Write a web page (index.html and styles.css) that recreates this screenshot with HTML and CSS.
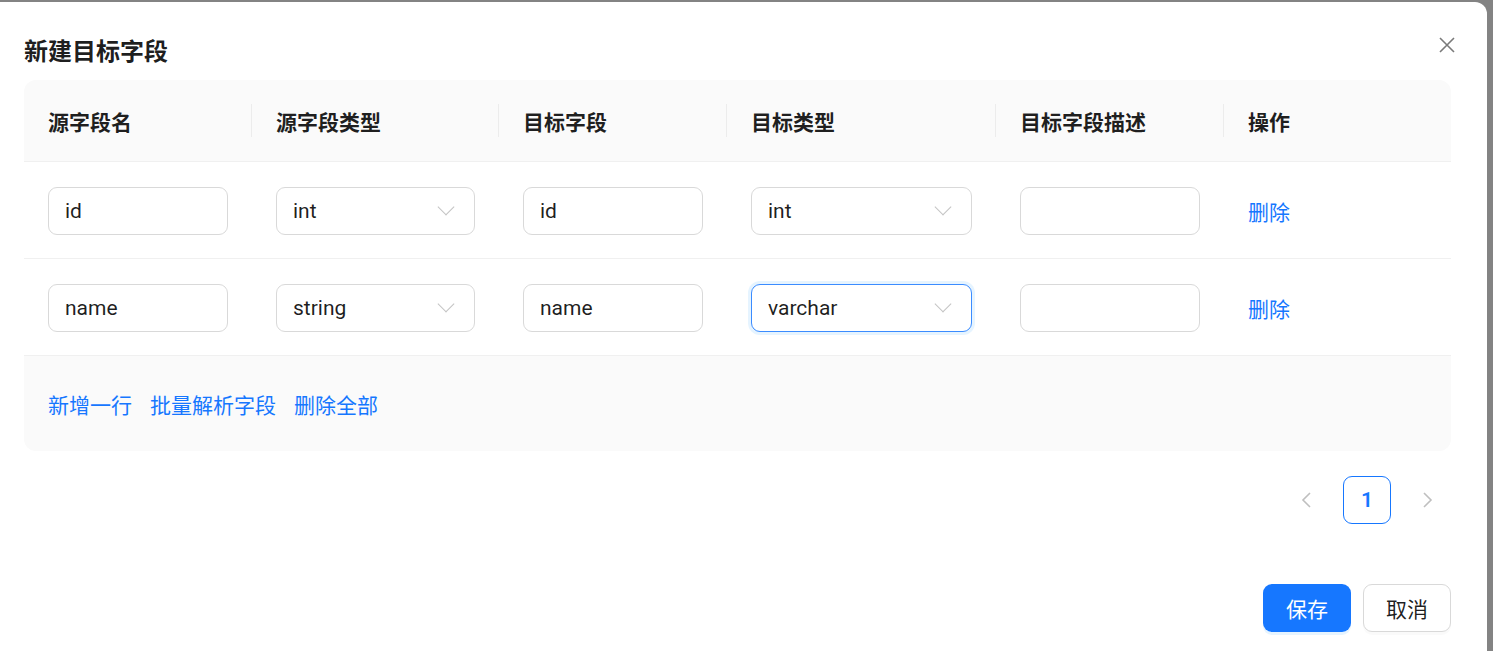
FILE: index.html
```html
<!DOCTYPE html>
<html lang="zh-CN">
<head>
    <meta charset="UTF-8">
    <title>新建目标字段</title>
    <link rel="stylesheet" href="styles.css">
</head>
<body>

<div class="modal">
    <button class="modal-close" aria-label="关闭">
        <svg width="18" height="18" viewBox="0 0 18 18"><path d="M2 2 L16 16 M16 2 L2 16" stroke="#7a7a7a" stroke-width="1.6" fill="none"/></svg>
    </button>
    <div class="modal-title">新建目标字段</div>

    <div class="field-table">
        <div class="row head">
            <div class="cell">源字段名</div>
            <div class="cell sep">源字段类型</div>
            <div class="cell sep">目标字段</div>
            <div class="cell sep">目标类型</div>
            <div class="cell sep">目标字段描述</div>
            <div class="cell sep">操作</div>
        </div>

        <div class="row body">
            <div class="cell"><div class="input w180">id</div></div>
            <div class="cell"><div class="input select w199">int<span class="arrow"></span></div></div>
            <div class="cell"><div class="input w180">id</div></div>
            <div class="cell"><div class="input select w221">int<span class="arrow"></span></div></div>
            <div class="cell"><div class="input w180"></div></div>
            <div class="cell"><a class="link">删除</a></div>
        </div>

        <div class="row body">
            <div class="cell"><div class="input w180">name</div></div>
            <div class="cell"><div class="input select w199">string<span class="arrow"></span></div></div>
            <div class="cell"><div class="input w180">name</div></div>
            <div class="cell"><div class="input select w221 focused">varchar<span class="arrow"></span></div></div>
            <div class="cell"><div class="input w180"></div></div>
            <div class="cell"><a class="link">删除</a></div>
        </div>

        <div class="table-actions">
            <a class="link">新增一行</a>
            <a class="link">批量解析字段</a>
            <a class="link">删除全部</a>
        </div>
    </div>

    <div class="pager">
        <span class="pager-btn">
            <svg width="18" height="18" viewBox="0 0 18 18"><path d="M12 2 L5 9 L12 16" stroke="#bfbfbf" stroke-width="1.6" fill="none"/></svg>
        </span>
        <span class="pager-item active">1</span>
        <span class="pager-btn">
            <svg width="18" height="18" viewBox="0 0 18 18"><path d="M6 2 L13 9 L6 16" stroke="#bfbfbf" stroke-width="1.6" fill="none"/></svg>
        </span>
    </div>

    <div class="modal-footer">
        <button class="btn btn-primary">保存</button>
        <button class="btn btn-default">取消</button>
    </div>
</div>

</body>
</html>
```

FILE: styles.css
```css
body { margin: 0; background: #838383; font-family: Roboto, "Noto Sans CJK SC", sans-serif; color: rgba(0,0,0,0.88); overflow: hidden; }
.modal { position: relative; background: #fff; margin: 2px 0 0 -12px; width: 1499px; height: 700px; box-sizing: border-box; padding: 32px 36px 0 36px; border-radius: 0 12px 0 0; }
.modal-close { position: absolute; top: 34px; right: 31px; width: 18px; height: 18px; padding: 0; border: none; background: none; cursor: pointer; }
.modal-title { font-size: 24px; font-weight: 700; line-height: 36px; margin-bottom: 10px; color: rgba(0,0,0,0.88); }

.field-table { background: #fafafa; border-radius: 12px; width: 1427px; }
.row { display: grid; grid-template-columns: 228px 247px 228px 269px 228px 227px; border-bottom: 1px solid #f0f0f0; }
.row .cell { padding: 0 0 0 24px; display: flex; align-items: center; position: relative; }
.head { height: 81px; font-size: 21px; font-weight: 700; }
.head .sep::before { content: ""; position: absolute; left: -1px; top: 24px; width: 1px; height: 33px; background: #ececec; }
.body { height: 96px; background: #fff; }
.body .cell { padding-top: 2px; }

.input { box-sizing: border-box; height: 48px; border: 1px solid #d9d9d9; border-radius: 9px; padding: 0 16px; font-size: 21px; line-height: 46px; background: #fff; position: relative; }
.w180 { width: 180px; }
.w199 { width: 199px; }
.w221 { width: 221px; }
.select .arrow { position: absolute; right: 19px; top: 15px; width: 18px; height: 18px; }
.select .arrow::before { content: ""; position: absolute; left: 3px; top: -2px; width: 11px; height: 11px; border-right: 1.3px solid #c4c4c4; border-bottom: 1.3px solid #c4c4c4; transform: rotate(45deg); }
.focused { border-color: #3b8cff; box-shadow: 0 0 0 3px rgba(5,145,255,0.1); }

.link { color: #1677ff; font-size: 21px; text-decoration: none; cursor: pointer; }
.table-actions { height: 95px; display: flex; align-items: center; gap: 18px; padding-left: 24px; }

.pager { display: flex; justify-content: flex-end; gap: 12px; margin-top: 25px; width: 1427px; }
.pager-btn, .pager-item { width: 48px; height: 48px; box-sizing: border-box; display: flex; align-items: center; justify-content: center; border-radius: 9px; }
.pager-item { font-size: 21px; font-weight: 600; }
.pager-item.active { border: 1px solid #1677ff; color: #1677ff; }

.modal-footer { display: flex; justify-content: flex-end; gap: 12px; margin-top: 60px; width: 1427px; }
.btn { height: 48px; width: 88px; border-radius: 9px; font-size: 21px; font-family: inherit; cursor: pointer; padding: 0; }
.btn-primary { background: #1677ff; color: #fff; border: none; box-shadow: 0 3px 0 rgba(5,145,255,0.1); }
.btn-default { background: #fff; color: rgba(0,0,0,0.88); border: 1px solid #d9d9d9; box-shadow: 0 3px 0 rgba(0,0,0,0.02); }
```
